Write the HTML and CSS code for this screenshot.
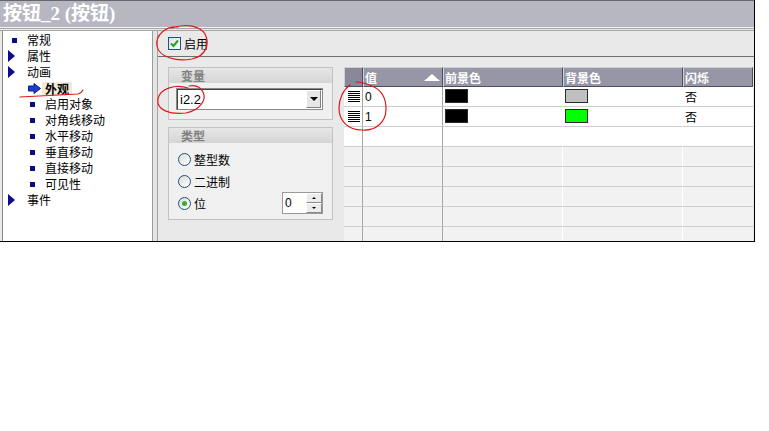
FILE: index.html
```html
<!DOCTYPE html>
<html lang="zh-CN">
<head>
    <meta charset="UTF-8" />
    <title>按钮_2 (按钮)</title>
    <link rel="stylesheet" href="styles.css">
</head>
<body>
    <div class="window">
        <div class="title">按钮_2 (按钮)</div>
        <div class="rule"></div>

        <div class="body">
            <ul class="tree">
                <li class="node"><span class="icon"><span class="bullet"></span></span>常规</li>
                <li class="node"><span class="icon"><span class="caret"></span></span>属性</li>
                <li class="node"><span class="icon"><span class="caret"></span></span>动画</li>
                <li class="node sub current">
                    <span class="icon">
                        <svg class="arrow" width="13" height="11" viewBox="0 0 13 11">
                            <path d="M0.5 3 H6 V0.5 L12.5 5.5 L6 10.5 V8 H0.5 Z" fill="#1b3fd0" stroke="#0a1f80" stroke-width="1"/>
                        </svg>
                    </span>
                    <span class="label">外观</span>
                </li>
                <li class="node sub"><span class="icon"><span class="bullet"></span></span>启用对象</li>
                <li class="node sub"><span class="icon"><span class="bullet"></span></span>对角线移动</li>
                <li class="node sub"><span class="icon"><span class="bullet"></span></span>水平移动</li>
                <li class="node sub"><span class="icon"><span class="bullet"></span></span>垂直移动</li>
                <li class="node sub"><span class="icon"><span class="bullet"></span></span>直接移动</li>
                <li class="node sub"><span class="icon"><span class="bullet"></span></span>可见性</li>
                <li class="node"><span class="icon"><span class="caret"></span></span>事件</li>
            </ul>
            <div class="splitter"></div>

            <div class="main">
                <div class="enable-row">
                    <span class="checkbox">
                        <svg width="11" height="11" viewBox="0 0 11 11">
                            <path d="M2 5.5 L4.5 8 L9 2.5" fill="none" stroke="#23a023" stroke-width="2"/>
                        </svg>
                    </span>
                    启用
                </div>

                <div class="content">
                    <div class="groups">
                        <div class="group">
                            <div class="group-head">变量</div>
                            <div class="group-body var-body">
                                <div class="combo">
                                    <span class="combo-text">i2.2</span>
                                    <span class="combo-btn"><span class="down"></span></span>
                                </div>
                            </div>
                        </div>

                        <div class="group">
                            <div class="group-head">类型</div>
                            <div class="group-body type-body">
                                <div class="radio-row"><span class="radio"></span>整型数</div>
                                <div class="radio-row"><span class="radio"></span>二进制</div>
                                <div class="radio-row">
                                    <span class="radio on"></span>位
                                    <div class="spin">
                                        <span class="spin-text">0</span>
                                        <span class="spin-btns">
                                            <span class="spin-btn"><span class="tri up"></span></span>
                                            <span class="spin-btn"><span class="tri dn"></span></span>
                                        </span>
                                    </div>
                                </div>
                            </div>
                        </div>
                    </div>

                    <div class="grid">
                        <div class="row head">
                            <div class="hd corner"></div>
                            <div class="hd">值<span class="sort"></span></div>
                            <div class="hd">前景色</div>
                            <div class="hd">背景色</div>
                            <div class="hd">闪烁</div>
                        </div>
                        <div class="row filled">
                            <div class="cell c1"><span class="row-icon"></span></div>
                            <div class="cell c2">0</div>
                            <div class="cell c3"><span class="swatch black"></span></div>
                            <div class="cell c4"><span class="swatch grey"></span></div>
                            <div class="cell c5">否</div>
                        </div>
                        <div class="row filled">
                            <div class="cell c1"><span class="row-icon"></span></div>
                            <div class="cell c2">1</div>
                            <div class="cell c3"><span class="swatch black"></span></div>
                            <div class="cell c4"><span class="swatch green"></span></div>
                            <div class="cell c5">否</div>
                        </div>
                        <div class="row filled">
                            <div class="cell c1"></div>
                            <div class="cell c2"></div>
                            <div class="cell c3"></div>
                            <div class="cell c4"></div>
                            <div class="cell c5"></div>
                        </div>
                        <div class="row blank">
                            <div class="cell c1"></div><div class="cell c2"></div><div class="cell c3"></div><div class="cell c4"></div><div class="cell c5"></div>
                        </div>
                        <div class="row blank">
                            <div class="cell c1"></div><div class="cell c2"></div><div class="cell c3"></div><div class="cell c4"></div><div class="cell c5"></div>
                        </div>
                        <div class="row blank">
                            <div class="cell c1"></div><div class="cell c2"></div><div class="cell c3"></div><div class="cell c4"></div><div class="cell c5"></div>
                        </div>
                        <div class="row blank">
                            <div class="cell c1"></div><div class="cell c2"></div><div class="cell c3"></div><div class="cell c4"></div><div class="cell c5"></div>
                        </div>
                        <div class="row blank">
                            <div class="cell c1"></div><div class="cell c2"></div><div class="cell c3"></div><div class="cell c4"></div><div class="cell c5"></div>
                        </div>
                    </div>
                </div>
            </div>
        </div>
    </div>

    <!-- red pen marks drawn over the screenshot -->
    <svg class="marks" width="769" height="431" viewBox="0 0 769 431">
        <g fill="none" stroke="#e01818" stroke-width="1.2" stroke-linecap="round">
            <path d="M178 27 C166 26 155 35 157 46 C159 57 176 62 192 59 C206 56 210 44 205 34 C200 26 186 23 172 28"/>
            <path d="M188 88 C176 84 160 88 158 99 C156 110 170 115 186 113 C200 110 207 100 203 92 C200 86 194 85 189 86"/>
            <path d="M350 85 C343 90 339 99 339 108 C339 121 348 130 362 130 C376 131 386 122 386 109 C386 98 382 91 374 87 C368 84 362 82 356 82"/>
            <path d="M20 97 C40 96 60 95 78 94 C81 93 82 92 83 90"/>
        </g>
    </svg>
</body>
</html>
```

FILE: styles.css
```css
body {
    margin: 0;
    background: #fff;
    font-family: "Noto Sans CJK SC", "Liberation Sans", sans-serif;
    font-size: 12px;
    color: #000;
    position: relative;
}

.window {
    width: 755px;
    height: 242px;
    box-sizing: border-box;
    border-right: 1px solid #000;
    border-bottom: 1px solid #000;
    background: #e9e9e9;
    display: flex;
    flex-direction: column;
}

.title {
    height: 27px;
    flex: none;
    box-sizing: border-box;
    border-top: 1px solid #66666e;
    background: #b7b7c1;
    color: #fff;
    font: bold 19px/25px "Liberation Serif", "Noto Sans CJK SC", serif;
    padding-left: 3px;
}

.rule {
    height: 4px;
    flex: none;
    background: linear-gradient(#f4f4f4 0 1px, #a6a6a6 1px 2px, #e8e8e8 2px 3px, #a6a6a6 3px 4px);
}

.body {
    flex: 1;
    display: flex;
    min-height: 0;
}

/* tree on the left */
.tree {
    list-style: none;
    margin: 0 0 0 2px;
    padding: 1px 0 0;
    width: 149px;
    flex: none;
    background: #fff;
    border-left: 1px solid #8c8c8c;
    border-right: 1px solid #9c9c9c;
}

.node {
    height: 16px;
    line-height: 16px;
    display: flex;
    align-items: center;
    padding-left: 5px;
    white-space: nowrap;
}

.icon {
    width: 19px;
    flex: none;
    display: flex;
    align-items: center;
}

.bullet {
    width: 5px;
    height: 5px;
    margin-left: 4px;
    background: #0c0c80;
}

.caret {
    width: 0;
    height: 0;
    border-top: 6px solid transparent;
    border-bottom: 6px solid transparent;
    border-left: 7px solid #0c0c8c;
}

.node.sub {
    padding-left: 26px;
}

.sub .icon {
    width: 16px;
}

.sub .bullet {
    margin-left: 1px;
}

.arrow {
    margin-left: -1px;
}

.current .label {
    background: #efebd9;
    font-weight: bold;
    padding: 0 3px;
    margin-left: -3px;
    line-height: 13px;
}

.splitter {
    width: 4px;
    flex: none;
    background: #e4e4e4;
    border-right: 1px solid #a4a4a4;
}

/* right side */
.main {
    flex: 1;
    min-width: 0;
    display: flex;
    flex-direction: column;
}

.enable-row {
    height: 26px;
    flex: none;
    box-sizing: border-box;
    border-bottom: 1px solid #6e6e6e;
    background: #e9e9e9;
    display: flex;
    align-items: center;
    gap: 3px;
    padding-left: 10px;
}

.checkbox {
    width: 13px;
    height: 13px;
    box-sizing: border-box;
    border: 1px solid #1c5180;
    background: linear-gradient(135deg, #e2e2dc, #fff);
    display: flex;
    align-items: center;
    justify-content: center;
}

.content {
    flex: 1;
    min-height: 0;
    display: flex;
    background: #e9e9e9;
}

.groups {
    width: 165px;
    flex: none;
    margin-left: 10px;
    padding-top: 10px;
    display: flex;
    flex-direction: column;
    gap: 7px;
}

.group {
    border: 1px solid #c2c2c2;
    background: #f0f0f0;
}

.group-head {
    height: 15px;
    line-height: 15px;
    padding-left: 12px;
    background: linear-gradient(#e6e6e6, #d5d5d5);
    color: #808080;
    font-weight: bold;
}

.var-body {
    padding: 5px 9px 9px 7px;
}

.combo {
    height: 22px;
    box-sizing: border-box;
    border: 1px solid #8a8a8a;
    box-shadow: inset 1px 1px 0 #404040;
    background: #fff;
    display: flex;
    align-items: center;
}

.combo-text {
    flex: 1;
    padding-left: 3px;
    font-family: "Liberation Sans", sans-serif;
    font-size: 13px;
}

.combo-btn {
    width: 15px;
    height: 18px;
    margin-right: 1px;
    box-sizing: border-box;
    background: #e6e6e6;
    border: 1px solid;
    border-color: #fff #808080 #808080 #fff;
    display: flex;
    align-items: center;
    justify-content: center;
}

.down {
    border-left: 4px solid transparent;
    border-right: 4px solid transparent;
    border-top: 4px solid #000;
}

.type-body {
    padding: 5px 9px 5px 9px;
}

.radio-row {
    height: 22px;
    display: flex;
    align-items: center;
    gap: 3px;
    font-size: 12px;
}

.radio {
    width: 13px;
    height: 13px;
    box-sizing: border-box;
    border: 1px solid #1c5180;
    border-radius: 50%;
    background: linear-gradient(135deg, #dcdcd6, #fff);
    display: flex;
    align-items: center;
    justify-content: center;
}

.radio.on::after {
    content: "";
    width: 5px;
    height: 5px;
    border-radius: 50%;
    background: #3eaa2c;
}

.spin {
    margin-left: auto;
    width: 41px;
    height: 22px;
    box-sizing: border-box;
    border: 1px solid #9a9a9a;
    background: #fff;
    display: flex;
}

.spin-text {
    flex: 1;
    padding-left: 2px;
    line-height: 20px;
    font-family: "Liberation Sans", sans-serif;
}

.spin-btns {
    width: 16px;
    display: flex;
    flex-direction: column;
}

.spin-btn {
    flex: 1;
    box-sizing: border-box;
    background: #ececec;
    border: 1px solid;
    border-color: #fff #8a8a8a #8a8a8a #fff;
    display: flex;
    align-items: center;
    justify-content: center;
}

.tri.up {
    border-left: 2px solid transparent;
    border-right: 2px solid transparent;
    border-bottom: 2px solid #000;
}

.tri.dn {
    border-left: 2px solid transparent;
    border-right: 2px solid transparent;
    border-top: 2px solid #000;
}

/* value table */
.grid {
    width: 409px;
    margin: 10px 0 0 11px;
    overflow: hidden;
    background: #f2f2f2;
}

.row {
    display: grid;
    grid-template-columns: 19px 80px 120px 120px 70px;
    height: 20px;
}

.hd {
    box-sizing: border-box;
    border: 1px solid;
    border-color: #cfcfd8 #4e4e5c #4e4e5c #cfcfd8;
    background: #9696a6;
    color: #fff;
    font-weight: bold;
    line-height: 17px;
    padding-left: 1px;
    display: flex;
    align-items: center;
}

.hd.corner {
    background: #88889a;
}

.sort {
    margin-left: auto;
    margin-right: 2px;
    border-left: 8px solid transparent;
    border-right: 8px solid transparent;
    border-bottom: 7px solid #fff;
}

.cell {
    box-sizing: border-box;
    border-bottom: 1px solid #cdcdcd;
    border-right: 1px solid #fff;
    display: flex;
    align-items: center;
    padding-left: 2px;
    line-height: 18px;
}

.cell.c1,
.cell.c2 {
    border-right-color: #a6a6a6;
}

.cell.c5 {
    border-right: none;
}

.filled .cell {
    background: #fff;
}

.blank .cell {
    background: #f2f2f2;
}

.c2 {
    font-family: "Liberation Sans", sans-serif;
}

.row-icon {
    width: 12px;
    height: 12px;
    margin-left: 2px;
    background: repeating-linear-gradient(#000 0 1px, #fff 1px 2px);
}

.swatch {
    width: 23px;
    height: 14px;
    box-sizing: border-box;
    border: 1px solid #2a2a2a;
    margin-top: -1px;
}

.swatch.black {
    background: #000;
}

.swatch.grey {
    background: #c0c0c0;
}

.swatch.green {
    background: #00ff00;
}

.marks {
    position: absolute;
    top: 0;
    left: 0;
    pointer-events: none;
}
```
